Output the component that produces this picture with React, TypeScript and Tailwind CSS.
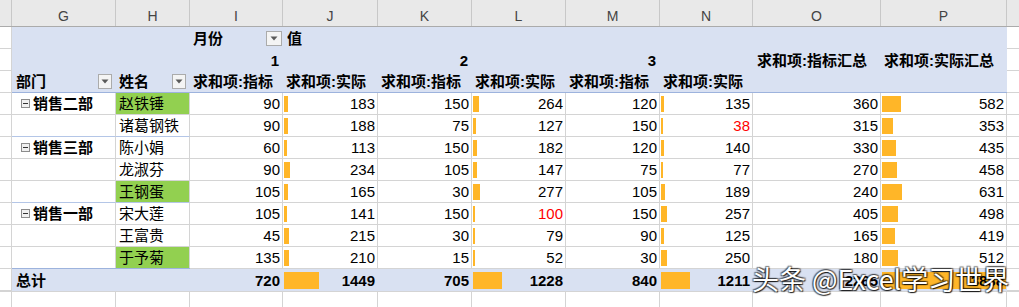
import React from "react";

const W = [
  "w-[12px]",
  "w-[104px]",
  "w-[74px]",
  "w-[93px]",
  "w-[95px]",
  "w-[94px]",
  "w-[94px]",
  "w-[94px]",
  "w-[93px]",
  "w-[128px]",
  "w-[126px]",
  "w-[12px]",
];
const BAR_MAX = [0, 0, 0, 0, 93, 0, 93, 0, 92, 0, 124, 0];
const LETTERS = ["", "G", "H", "I", "J", "K", "L", "M", "N", "O", "P", ""];
const TOTAL = 3888;

type Row = {
  dept?: string;
  name: string;
  green?: boolean;
  vals: number[];
  red?: number[];
  groupEnd?: boolean;
};

const rows: Row[] = [
  { dept: "销售二部", name: "赵铁锤", green: true, vals: [90, 183, 150, 264, 120, 135, 360, 582] },
  { name: "诸葛钢铁", vals: [90, 188, 75, 127, 150, 38, 315, 353], red: [5], groupEnd: true },
  { dept: "销售三部", name: "陈小娟", vals: [60, 113, 150, 182, 120, 140, 330, 435] },
  { name: "龙淑芬", vals: [90, 234, 105, 147, 75, 77, 270, 458] },
  { name: "王钢蛋", green: true, vals: [105, 165, 30, 277, 105, 189, 240, 631], groupEnd: true },
  { dept: "销售一部", name: "宋大莲", vals: [105, 141, 150, 100, 150, 257, 405, 498], red: [3] },
  { name: "王富贵", vals: [45, 215, 30, 79, 90, 125, 165, 419] },
  { name: "于予菊", green: true, vals: [135, 210, 15, 52, 30, 250, 180, 512] },
];
const totals = [720, 1449, 705, 1228, 840, 1211, 2265, 3888];

function Drop({ small }: { small?: boolean }) {
  return (
    <div
      className={`${small ? "w-[14px] h-[15px]" : "w-[16px] h-[15px]"} shrink-0 border border-[#ababab] bg-[#f4f4f4] flex items-center justify-center`}
    >
      <svg width="8" height="5" viewBox="0 0 8 5">
        <path d="M0.5 0.5 L7.5 0.5 L4 4.5 Z" fill="#5a5a5a" />
      </svg>
    </div>
  );
}

function Minus() {
  return (
    <div className="w-[9px] h-[9px] border border-[#8c8c8c] bg-[#f0f0f0] flex items-center justify-center mr-[3px] shrink-0">
      <div className="w-[5px] h-[1px] bg-[#333]" />
    </div>
  );
}

function Bar({ col, v }: { col: number; v: number }) {
  const max = BAR_MAX[col];
  if (!max) return null;
  const w = Math.max(2, Math.round((v / TOTAL) * max));
  return (
    <div
      className="absolute left-[1px] top-[3px] bottom-[2px] bg-[#ffb628]"
      style={{ width: w }}
    />
  );
}

const grid = "border-r border-b border-[#d4d4d4]";

export default function App() {
  return (
    <div className="relative w-[1019px] h-[307px] overflow-hidden bg-white text-black font-['Liberation_Sans','Noto_Sans_CJK_SC',sans-serif] text-[15px] leading-none">
      {/* column header */}
      <div className="flex h-[27px] bg-[#e9e9e9] border-b border-[#ababab]">
        {LETTERS.map((l, i) => (
          <div
            key={i}
            className={`${W[i]} shrink-0 h-full flex items-end justify-center pb-[3px] text-[14px] text-[#444] ${i < 11 ? "border-r border-[#c8c8c8]" : ""}`}
          >
            {l}
          </div>
        ))}
      </div>

      {/* pivot header row 1 */}
      <div className="flex h-[22px]">
        <div className={`${W[0]} shrink-0 ${grid}`} />
        <div className="w-[995px] shrink-0 bg-[#d9e1f2] flex font-bold">
          <div className="w-[178px] shrink-0" />
          <div className="w-[93px] shrink-0 flex items-center justify-between pl-[3px] pr-[1px]">
            <span>月份</span>
            <Drop />
          </div>
          <div className="flex-1 flex items-center pl-[4px]">值</div>
        </div>
        <div className={`${W[11]} shrink-0 border-b border-[#d4d4d4]`} />
      </div>

      {/* pivot header row 2 */}
      <div className="flex h-[22px]">
        <div className={`${W[0]} shrink-0 ${grid}`} />
        <div className="w-[995px] shrink-0 bg-[#d9e1f2] flex font-bold">
          <div className="w-[178px] shrink-0" />
          <div className="w-[93px] shrink-0 flex items-center justify-end pr-[4px]">1</div>
          <div className="w-[95px] shrink-0" />
          <div className="w-[94px] shrink-0 flex items-center justify-end pr-[4px]">2</div>
          <div className="w-[94px] shrink-0" />
          <div className="w-[94px] shrink-0 flex items-center justify-end pr-[4px]">3</div>
          <div className="w-[93px] shrink-0" />
          <div className="w-[128px] shrink-0 flex items-center pl-[4px] whitespace-nowrap">求和项:指标汇总</div>
          <div className="w-[126px] shrink-0 flex items-center pl-[3px] whitespace-nowrap">求和项:实际汇总</div>
        </div>
        <div className={`${W[11]} shrink-0 border-b border-[#d4d4d4]`} />
      </div>

      {/* pivot header row 3 */}
      <div className="flex h-[22px]">
        <div className={`${W[0]} shrink-0 ${grid}`} />
        <div className="w-[995px] shrink-0 bg-[#d9e1f2] flex font-bold border-b border-[#9db3dd]">
          <div className="w-[104px] shrink-0 flex items-center justify-between pl-[4px] pr-[4px]">
            <span>部门</span>
            <Drop small />
          </div>
          <div className="w-[74px] shrink-0 flex items-center justify-between pl-[3px] pr-[4px]">
            <span>姓名</span>
            <Drop small />
          </div>
          {["求和项:指标", "求和项:实际", "求和项:指标", "求和项:实际", "求和项:指标", "求和项:实际"].map(
            (t, i) => (
              <div
                key={i}
                className={`${W[i + 3]} shrink-0 flex items-center pl-[3px] whitespace-nowrap overflow-hidden`}
              >
                {t}
              </div>
            )
          )}
        </div>
        <div className={`${W[11]} shrink-0 border-b border-[#d4d4d4]`} />
      </div>

      {/* data rows */}
      {rows.map((r, ri) => (
        <div key={ri} className="flex h-[22px]">
          <div className={`${W[0]} shrink-0 border-r border-b border-[#d4d4d4]`} />
          <div
            className={`${W[1]} shrink-0 border-r border-[#d4d4d4] border-b ${r.groupEnd ? "border-b-[#b4c6e7]" : ""} flex items-center pl-[9px] font-bold`}
          >
            {r.dept && (
              <>
                <Minus />
                <span>{r.dept}</span>
              </>
            )}
          </div>
          <div
            className={`${W[2]} shrink-0 border-r border-b border-[#d4d4d4] ${r.groupEnd ? "border-b-[#b4c6e7]" : ""} ${r.green ? "bg-[#92d050]" : ""} flex items-center pl-[3px] whitespace-nowrap`}
          >
            {r.name}
          </div>
          {r.vals.map((v, vi) => {
            const col = vi + 3;
            const red = r.red?.includes(vi);
            return (
              <div
                key={vi}
                className={`${W[col]} shrink-0 relative ${grid} flex items-center justify-end pr-[2px]`}
              >
                <Bar col={col} v={v} />
                <span className={`relative ${red ? "text-[#ff0000]" : ""}`}>{v}</span>
              </div>
            );
          })}
          <div className={`${W[11]} shrink-0 border-b border-[#d4d4d4]`} />
        </div>
      ))}

      {/* total row */}
      <div className="flex h-[22px]">
        <div className={`${W[0]} shrink-0 border-r border-b border-[#d4d4d4]`} />
        <div className="w-[995px] shrink-0 bg-[#d9e1f2] flex font-bold border-t border-[#9db3dd] -mt-[1px] h-[23px]">
          <div className="w-[178px] shrink-0 flex items-center pl-[4px]">总计</div>
          {totals.map((v, vi) => {
            const col = vi + 3;
            return (
              <div
                key={vi}
                className={`${W[col]} shrink-0 relative flex items-center justify-end pr-[3px]`}
              >
                <Bar col={col} v={v} />
                <span className="relative">{v}</span>
              </div>
            );
          })}
        </div>
        <div className={`${W[11]} shrink-0 border-b border-[#d4d4d4]`} />
      </div>

      {/* empty row */}
      <div className="flex h-[16px] border-t border-[#d4d4d4]">
        {W.map((w, i) => (
          <div key={i} className={`${w} shrink-0 ${i < 11 ? "border-r border-[#d4d4d4]" : ""}`} />
        ))}
      </div>

      {/* watermark */}
      <div className="absolute left-[752px] top-[265px] text-[27px] leading-none text-white whitespace-nowrap font-['Noto_Sans_CJK_SC',sans-serif] [text-shadow:1px_1px_1px_rgba(0,0,0,0.8),-1px_-1px_1px_rgba(0,0,0,0.5),1px_-1px_1px_rgba(0,0,0,0.5),-1px_1px_1px_rgba(0,0,0,0.5)]">
        头条 @Excel学习世界
      </div>
    </div>
  );
}
